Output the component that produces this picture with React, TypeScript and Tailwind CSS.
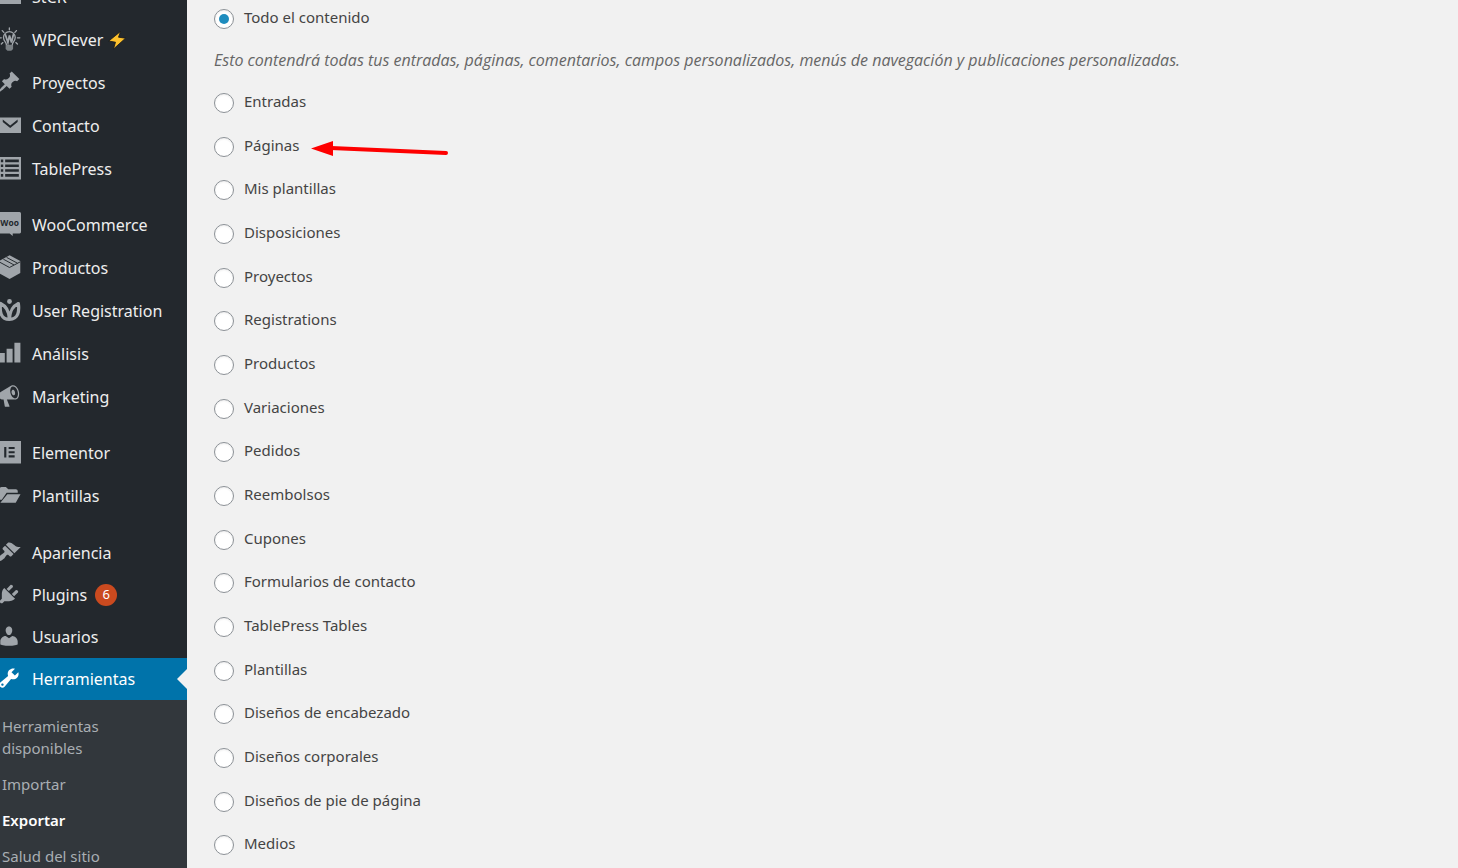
import { useState, type ReactNode } from "react";
import clsx from "clsx";

// Admin screen: left navigation plus the export options.

function Icon({ children }: { children: ReactNode }) {
  return (
    <svg
      viewBox="0 0 20 20"
      className="mb-[2px] size-6 shrink-0"
      fill="currentColor"
      aria-hidden="true"
    >
      {children}
    </svg>
  );
}

const icons = {
  mail: (
    <Icon>
      <path d="M2 3.8h18v12.8H2zM4.800 5.400v2l6.200 5.200 6.200-5.200v-2L11 10.400z" fillRule="evenodd" />
    </Icon>
  ),
  bulb: (
    <Icon>
      <g fill="none" stroke="currentColor" strokeWidth="1.1" strokeLinecap="round">
        <path d="M10.3 .8v1.500M4.4 3l1.300 1.500M16.200 3l-1.300 1.500M1.800 9h1.800M17 9h2M3.600 14.200l1.300-1.200M17 14.200l-1.300-1.200" />
        <path d="M7.800 14.500c0-2-2.400-3-2.400-5.700a4.900 4.900 0 0 1 9.800 0c0 2.700-2.400 3.700-2.400 5.700" />
        <path d="M7 6.500l2.100 6.500 1.300-6 1.700 6 1.500-6.500" strokeWidth="1.500" />
      </g>
      <path d="M7.200 14.700h6.200v3.600l-1.500 1.500H8.700l-1.500-1.500z" opacity=".7" />
    </Icon>
  ),
  pin: (
    <Icon>
      <path d="M10.440 3.020l1.820-1.820 6.360 6.350-1.830 1.820c-1.050-.680-2.480-.570-3.410.360l-.750.750c-.920.930-1.040 2.350-.350 3.410l-1.830 1.820-2.410-2.410-2.800 2.790c-.420.420-3.380 2.710-3.800 2.290s1.860-3.390 2.280-3.810l2.790-2.790L4.100 9.360l1.830-1.820c1.050.690 2.480.570 3.400-.360l.750-.750c.930-.920 1.050-2.350.360-3.410z" />
    </Icon>
  ),
  list: (
    <Icon>
      <path
        fillRule="evenodd"
        d="M1 .8h19v18.700H1zM3.200 3v2.200h2V3zm3.600 0v2.200h11.400V3zM3.200 7v2.200h2V7zm3.600 0v2.200h11.400V7zm-3.600 4v2.200h2V11zm3.600 0v2.200h11.400V11zm-3.600 4v2.200h2V15zm3.600 0v2.200h11.400V15z"
      />
    </Icon>
  ),
  woo: (
    <Icon>
      <path d="M1.500 0h17.300c.8 0 1.200.6 1.200 1.400v15.100c0 .8-.4 1.400-1.200 1.400h-5.700v2.100l-2.600-2.100H1.500z" />
      <text
        x="10.500"
        y="11.500"
        textAnchor="middle"
        className="fill-[#23282d] font-['Open_Sans',sans-serif] text-[7px] font-bold"
      >
        Woo
      </text>
    </Icon>
  ),
  box: (
    <Icon>
      <path d="M10.500 .3l8.900 4.800v10L10.500 20l-8.900-4.900v-10z" />
      <path
        d="M1.700 5.700l8.700 4.700 9-4.700M5.300 3.500l8.900 4.800M8 2l9 4.800"
        fill="none"
        stroke="#23282d"
        strokeWidth=".8"
      />
    </Icon>
  ),
  tulip: (
    <Icon>
      <circle cx="10.400" cy="2.900" r="2" />
      <path
        d="M3 4.600c-.8 5.800-.4 13 7.300 13.300C18.200 17.600 18.600 10.400 17.800 4.600c-4.600 2.200-7 5.400-7.400 13.100C10.100 10.700 7.600 6.800 3 4.600z"
        fill="none"
        stroke="currentColor"
        strokeWidth="2.700"
        strokeLinejoin="round"
      />
    </Icon>
  ),
  chart: (
    <Icon>
      <path d="M19.500 18V1.500h-5V18h5zm-6.500 0V6.500H8V18h5zM6.500 18v-8H2v8h4.500z" />
    </Icon>
  ),
  megaphone: (
    <Icon>
      <path d="M18.150 5.940c.460 1.620.380 3.220-.020 4.480-.420 1.280-1.260 2.180-2.300 2.480-.160.060-.260.060-.400.060-.060.020-.120.020-.180.020-.060.020-.140.020-.220.020h-6.800l2.220 5.500c.020.140-.060.260-.140.340-.080.100-.240.160-.340.160H6.950c-.100 0-.260-.060-.340-.160-.080-.080-.160-.200-.140-.340l-1-5.500H4.250l-.020-.020c-.500.060-1.080-.180-1.540-.620s-.880-1.080-1.060-1.880c-.240-.800-.200-1.560-.020-2.200.180-.620.580-1.080 1.060-1.300l.020-.020 9-5.400c.100-.060.180-.100.240-.160.060-.040.140-.080.240-.120.160-.080.280-.120.500-.180 1.040-.300 2.240.100 3.220.980s1.840 2.240 2.260 3.860zm-2.580 5.980h-.020c.400-.100.740-.340 1.040-.700.580-.700.860-1.760.860-3.040 0-.640-.100-1.300-.280-1.980-.340-1.360-1.020-2.500-1.780-3.240s-1.680-1.100-2.460-.880c-.820.220-1.400.960-1.700 2-.320 1.040-.280 2.360.060 3.720.380 1.360 1 2.500 1.800 3.240.780.740 1.620 1.100 2.480.880zm-2.540-7.080c.220-.040.420-.020.620.040.380.160.760.480 1.020 1s.420 1.200.420 1.780c0 .300-.040.560-.120.800-.180.480-.440.840-.860.940-.340.100-.800-.060-1.140-.400s-.640-.860-.780-1.500c-.180-.620-.120-1.240.020-1.720s.480-.840.820-.940z" />
    </Icon>
  ),
  elementor: (
    <Icon>
      <path
        fillRule="evenodd"
        d="M1 .8h19v18.700H1zM6 5.800v8.700h1.800V5.800zm3.700 0v1.700h5V5.800zm0 3.500V11h5V9.300zm0 3.500v1.700h5v-1.700z"
      />
    </Icon>
  ),
  folder: (
    <Icon>
      <path d="M2 14V5.200C2 4.200 2.800 3.400 3.800 3.400h3.600l2 1.900h6.300c.9 0 1.600.7 1.600 1.600v1.300H8L4 14zM8.600 9.400H19.600l-4 7H2.800z" />
    </Icon>
  ),
  brush: (
    <Icon>
      <path d="M14.480 11.060L7.410 3.990l1.500-1.500c.500-.560 2.300-.470 3.510.320 1.210.800 1.430 1.280 2.910 2.100 1.180.640 2.450 1.260 4.450.850zm-.710.710L6.700 4.700 4.930 6.470c-.390.390-.390 1.020 0 1.410l1.060 1.060c.390.390.390 1.030 0 1.420-.600.600-1.430 1.110-2.210 1.690-.350.260-.700.530-1.010.840C1.430 14.230.400 16.080 1.400 17.070c.990 1 2.840-.030 4.180-1.360.310-.310.580-.660.850-1.020.570-.780 1.080-1.610 1.690-2.210.390-.390 1.020-.390 1.410 0l1.060 1.060c.390.390 1.020.390 1.410 0z" />
    </Icon>
  ),
  plug: (
    <Icon>
      <path d="M13.110 4.360L9.870 7.600 8 5.730l3.240-3.240c.350-.340 1.050-.200 1.560.320.520.510.660 1.210.310 1.550zm-8 1.770l.910-1.120 9.010 9.010-1.190.840c-.710.710-2.630 1.160-3.820 1.160H6.140L4.900 17.260c-.590.590-1.540.590-2.120 0-.590-.580-.590-1.530 0-2.120l1.240-1.240v-3.880c0-1.130.400-3.190 1.090-3.890zm7.260 3.970l3.240-3.240c.340-.350 1.040-.210 1.550.310.520.510.660 1.210.310 1.550l-3.240 3.250z" />
    </Icon>
  ),
  user: (
    <Icon>
      <path d="M10 9.250c-2.270 0-2.730-3.440-2.730-3.440C7 4.020 7.820 2 9.970 2c2.160 0 2.980 2.020 2.710 3.810 0 0-.410 3.440-2.680 3.440zm0 2.570L12.720 10c2.390 0 4.520 2.330 4.520 4.530v2.490s-3.650 1.130-7.240 1.130c-3.650 0-7.240-1.130-7.240-1.130v-2.490c0-2.250 1.940-4.480 4.470-4.480z" />
    </Icon>
  ),
  wrench: (
    <Icon>
      <path d="M16.680 9.770c-1.340 1.340-3.300 1.670-4.950.990l-5.410 6.520c-.990.990-2.590.990-3.580 0s-.990-2.590 0-3.570l6.520-5.420c-.680-1.650-.350-3.610.990-4.950 1.280-1.280 3.120-1.620 4.720-1.060l-2.890 2.890 2.820 2.820 2.860-2.870c.530 1.580.180 3.390-1.080 4.650zM3.810 16.210c.400.390 1.040.390 1.430 0 .400-.400.400-1.040 0-1.430-.390-.400-1.030-.400-1.430 0-.390.390-.390 1.030 0 1.430z" />
    </Icon>
  ),
};

interface MenuItem {
  label: string;
  icon: keyof typeof icons;
  badge?: number;
  bolt?: boolean;
  active?: boolean;
}

const mainGroups: MenuItem[][] = [
  [
    { label: "StCR", icon: "mail" },
    { label: "WPClever", icon: "bulb", bolt: true },
    { label: "Proyectos", icon: "pin" },
    { label: "Contacto", icon: "mail" },
    { label: "TablePress", icon: "list" },
  ],
  [
    { label: "WooCommerce", icon: "woo" },
    { label: "Productos", icon: "box" },
    { label: "User Registration", icon: "tulip" },
    { label: "Análisis", icon: "chart" },
    { label: "Marketing", icon: "megaphone" },
  ],
  [
    { label: "Elementor", icon: "elementor" },
    { label: "Plantillas", icon: "folder" },
  ],
];

const systemItems: MenuItem[] = [
  { label: "Apariencia", icon: "brush" },
  { label: "Plugins", icon: "plug", badge: 6 },
  { label: "Usuarios", icon: "user" },
  { label: "Herramientas", icon: "wrench", active: true },
];

const submenu = ["Herramientas disponibles", "Importar", "Exportar", "Salud del sitio"];

const contentTypes = [
  "Entradas",
  "Páginas",
  "Mis plantillas",
  "Disposiciones",
  "Proyectos",
  "Registrations",
  "Productos",
  "Variaciones",
  "Pedidos",
  "Reembolsos",
  "Cupones",
  "Formularios de contacto",
  "TablePress Tables",
  "Plantillas",
  "Diseños de encabezado",
  "Diseños corporales",
  "Diseños de pie de página",
  "Medios",
];

function Bolt() {
  return (
    <svg viewBox="0 0 18 20" className="ml-[5px] h-5 w-[18px]" aria-hidden="true">
      <path
        d="M12.500 1.500L.8 11l6.700 1.200L5.500 19 17.500 8.200l-7-1z"
        fill="#fdc12d"
        stroke="#15171a"
        strokeWidth=".8"
        strokeLinejoin="round"
      />
    </svg>
  );
}

function MenuLink({ item, compact }: { item: MenuItem; compact?: boolean }) {
  return (
    <li>
      <a
        href="#"
        className={clsx(
          "flex items-center pl-[29px] text-[16px]",
          compact ? "h-[42px]" : "h-[43px]",
          item.active ? "bg-[#0073aa] text-white" : "text-[#eeeeee]"
        )}
      >
        <span className={clsx("-ml-8 mr-[11px]", !item.active && "text-[#a0a5aa]")}>
          {icons[item.icon]}
        </span>
        <span>{item.label}</span>
        {item.bolt && <Bolt />}
        {item.badge && (
          <span className="ml-2 flex size-[22px] items-center justify-center rounded-full bg-[#ca4a1f] text-[13px] text-white">
            {item.badge}
          </span>
        )}
        {item.active && (
          <svg viewBox="0 0 10 20" className="ml-auto h-5 w-[10px]" aria-hidden="true">
            <path d="M10 0v20L0 10z" fill="#f1f1f1" />
          </svg>
        )}
      </a>
    </li>
  );
}

function Sidebar() {
  return (
    <aside className="w-[187px] shrink-0 overflow-hidden bg-[#23282d]">
      <nav className="-mt-[25px]">
        {mainGroups.map((group) => (
          <ul key={group[0].label} className="mb-[13px]">
            {group.map((item) => (
              <MenuLink key={item.label} item={item} />
            ))}
          </ul>
        ))}
        <ul className="pt-[2px]">
          {systemItems.map((item) => (
            <MenuLink key={item.label} item={item} compact />
          ))}
        </ul>
        <ul className="bg-[#32373c] pt-2 pb-3 pl-[2px] text-[15px] leading-[22px] text-[#a9aeb3]">
          {submenu.map((label) => (
            <li key={label} className="w-32 py-[7px]">
              <a href="#" className={clsx(label === "Exportar" && "font-semibold text-white")}>
                {label}
              </a>
            </li>
          ))}
        </ul>
      </nav>
    </aside>
  );
}

interface OptionProps {
  label: string;
  checked: boolean;
  onSelect: () => void;
}

function Option({ label, checked, onSelect }: OptionProps) {
  return (
    <label className="flex items-center gap-[10px]">
      <input
        type="radio"
        name="content"
        checked={checked}
        onChange={onSelect}
        className="flex size-5 appearance-none items-center justify-center rounded-full border border-[#8c9196] bg-white shadow-[inset_0_1px_2px_rgba(0,0,0,0.07)] before:size-[10px] before:rounded-full checked:before:bg-[#1e8cbe] checked:before:content-['']"
      />
      <span className="pb-[3px]">{label}</span>
    </label>
  );
}

// Points at the option the reader has to pick
function Arrow() {
  return (
    <svg
      viewBox="0 0 138 18"
      className="absolute top-1/2 left-full ml-3 h-[18px] w-[138px] -translate-y-1/2"
      aria-hidden="true"
    >
      <path d="M20 10l115 5" stroke="#fe0000" strokeWidth="4" strokeLinecap="round" />
      <path d="M0 10.500L22 3v15z" fill="#fe0000" />
    </svg>
  );
}

export default function App() {
  const [selected, setSelected] = useState("Todo el contenido");

  return (
    <div className="flex h-screen overflow-hidden bg-[#f1f1f1] font-['Noto_Sans','Open_Sans',sans-serif]">
      <Sidebar />
      <main className="min-w-0 flex-1 pl-[27px] text-[15px] text-[#444444]">
        <div className="flex h-[38px] items-center">
          <Option
            label="Todo el contenido"
            checked={selected === "Todo el contenido"}
            onSelect={() => setSelected("Todo el contenido")}
          />
        </div>
        <p className="flex h-[43px] items-center font-['Open_Sans','Noto_Sans',sans-serif] text-[16px] text-[#666666] italic">
          Esto contendrá todas tus entradas, páginas, comentarios, campos personalizados, menús de
          navegación y publicaciones personalizadas.
        </p>
        <ul>
          {contentTypes.map((label) => (
            <li key={label} className="flex h-11 items-center nth-[3n+2]:h-[43px]">
              <div className="relative">
                <Option
                  label={label}
                  checked={selected === label}
                  onSelect={() => setSelected(label)}
                />
                {label === "Páginas" && <Arrow />}
              </div>
            </li>
          ))}
        </ul>
      </main>
    </div>
  );
}
